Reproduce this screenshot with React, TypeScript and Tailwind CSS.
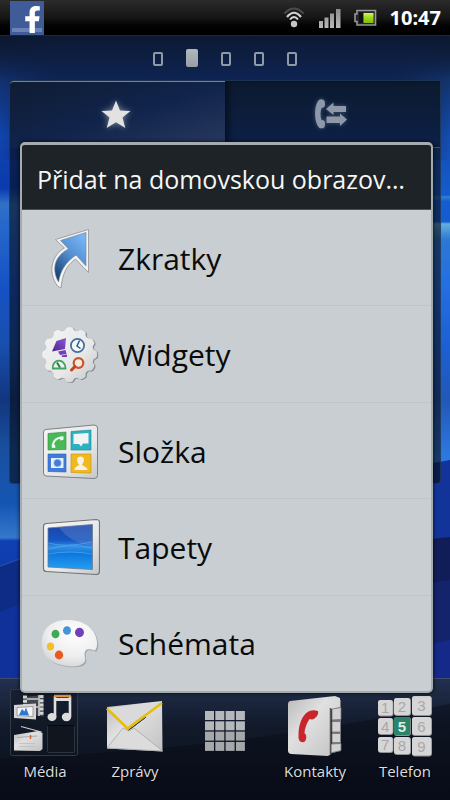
import React from 'react';
import { FaFacebookF } from 'react-icons/fa';

function Wallpaper() {
  return (
    <svg className="absolute inset-0 h-full w-full" viewBox="0 0 450 800" preserveAspectRatio="none" aria-hidden="true">
      <defs>
        <linearGradient id="wl" x1="0" y1="0" x2="0" y2="800" gradientUnits="userSpaceOnUse">
          <stop offset="0.045" stopColor="#0d1c3a" />
          <stop offset="0.1" stopColor="#11306e" />
          <stop offset="0.17" stopColor="#1145ae" />
          <stop offset="0.235" stopColor="#0a3aae" />
          <stop offset="0.255" stopColor="#2f72c4" />
          <stop offset="0.28" stopColor="#2668ca" />
          <stop offset="0.36" stopColor="#1552c4" />
          <stop offset="0.43" stopColor="#184fae" />
          <stop offset="0.5" stopColor="#12367e" />
          <stop offset="0.56" stopColor="#194f9e" />
          <stop offset="0.63" stopColor="#1556b4" />
          <stop offset="0.672" stopColor="#3478cc" />
          <stop offset="0.676" stopColor="#0f40b4" />
          <stop offset="0.75" stopColor="#0e38a4" />
          <stop offset="0.85" stopColor="#10309c" />
        </linearGradient>
        <linearGradient id="wr" x1="0" y1="0" x2="0" y2="800" gradientUnits="userSpaceOnUse">
          <stop offset="0.045" stopColor="#0d1c38" />
          <stop offset="0.1" stopColor="#12336a" />
          <stop offset="0.17" stopColor="#144cae" />
          <stop offset="0.244" stopColor="#145ccf" />
          <stop offset="0.246" stopColor="#2e82d2" />
          <stop offset="0.252" stopColor="#145ccf" />
          <stop offset="0.277" stopColor="#145ccf" />
          <stop offset="0.28" stopColor="#62aede" />
          <stop offset="0.3" stopColor="#2c78d4" />
          <stop offset="0.35" stopColor="#2470e2" />
          <stop offset="0.43" stopColor="#1c60d4" />
          <stop offset="0.5" stopColor="#2258b8" />
          <stop offset="0.57" stopColor="#2d78e0" />
        </linearGradient>
        <linearGradient id="wt" x1="0" x2="1" y1="0" y2="0">
          <stop offset="0" stopColor="#0e2150" stopOpacity="0" />
          <stop offset="0.12" stopColor="#0e2452" />
          <stop offset="0.88" stopColor="#0e2452" />
          <stop offset="1" stopColor="#0e2150" stopOpacity="0" />
        </linearGradient>
        <linearGradient id="wd" x1="0" x2="0" y1="0" y2="1">
          <stop offset="0" stopColor="#0c1830" stopOpacity="0.9" />
          <stop offset="1" stopColor="#0c1830" stopOpacity="0" />
        </linearGradient>
      </defs>
      <rect width="225" height="800" fill="url(#wl)" />
      <rect x="225" width="225" height="800" fill="url(#wr)" />
      <rect y="36" width="450" height="124" fill="url(#wt)" />
      <rect y="36" width="450" height="44" fill="url(#wd)" />
      <path d="M0 566 L28 556 V720 H0Z" fill="#0e2c86" />
      <path d="M0 566 L28 556" stroke="#1f4ca4" strokeWidth="1.5" />
      <path d="M0 612 L28 600 V720 H0Z" fill="#10309a" />
      <path d="M225 500 L450 460 V700 H225Z" fill="#12349a" />
      <path d="M225 560 L450 537 V700 H225Z" fill="#111d58" />
      <path d="M225 610 L450 580 V700 H225Z" fill="#14246c" />
      <path d="M225 690 L450 640 V700 H225Z" fill="#15298a" />
    </svg>
  );
}

function StatusBar() {
  return (
    <header className="relative flex h-9 items-center border-b border-[#232426] bg-linear-to-b from-[#2b2b2b] via-[#161616] to-black pl-[10px] pr-[9px]">
      <span className="relative flex h-[34px] w-[34px] items-end justify-end bg-[#3f5b98] pb-[2px] pr-[3px]" aria-label="Facebook">
        <span className="absolute inset-x-[2px] bottom-[3px] h-[4px] bg-[#6b82b4]" />
        <FaFacebookF className="relative h-[27px] w-[17px] text-white" preserveAspectRatio="none" />
      </span>
      <div className="ml-auto flex items-center">
        <svg width="94" height="36" viewBox="283 0 94 36" aria-hidden="true">
          <defs>
            <linearGradient id="sig" x1="0" y1="0" x2="0" y2="1">
              <stop offset="0" stopColor="#8d8d8d" />
              <stop offset="1" stopColor="#b8b8b8" />
            </linearGradient>
            <linearGradient id="bat" x1="0" y1="0" x2="0" y2="1">
              <stop offset="0" stopColor="#d3f56b" />
              <stop offset="0.4" stopColor="#a4dd1e" />
              <stop offset="1" stopColor="#7fbe08" />
            </linearGradient>
          </defs>
          <g fill="none" strokeLinecap="butt">
            <path d="M284.500 13.500 Q294 3.500 303.500 13.500" stroke="#4b4b4b" strokeWidth="2" />
            <path d="M287 17 Q294 8.500 301 17" stroke="#d2d2d2" strokeWidth="2.200" />
            <path d="M290 19.500 Q294 14.500 298 19.500" stroke="#dadada" strokeWidth="2" />
          </g>
          <circle cx="294" cy="24" r="3.200" fill="#c4c4c4" />
          <path d="M319 21h4v7h-4zM324.500 17.500h4v10.500h-4zM330 13.500h4v14.500h-4zM336 9h4.500v19h-4.500z" fill="url(#sig)" />
          <path d="M357 10.500 H375.500 V25 H357 V21.500 H355 V14 H357Z" fill="#252525" stroke="#969696" strokeWidth="1.600" />
          <rect x="359" y="12.500" width="4" height="10.500" fill="#111" />
          <rect x="363.500" y="13" width="10" height="10" fill="url(#bat)" />
        </svg>
        <time className="ml-[13px] font-['Noto_Sans',sans-serif] text-[20px] font-bold leading-[36px] text-white">10:47</time>
      </div>
    </header>
  );
}

function PageDots() {
  return (
    <nav aria-label="Plochy" className="relative flex h-11 items-center justify-center gap-[23px]">
      {[0, 1, 2, 3, 4].map((i) =>
        i === 1 ? (
          <button key={i} aria-label="Plocha 2" className="h-[18px] w-[12px] rounded-[2px] bg-linear-to-b from-[#b4b8be] to-[#999da4]" />
        ) : (
          <button key={i} aria-label={'Plocha ' + (i + 1)} className="mt-[2px] h-[14px] w-[10px] rounded-[2px] border-2 border-[#9299a6]" />
        ),
      )}
    </nav>
  );
}

function HomeWidget() {
  return (
    <section className="relative mx-[9px] flex h-[404px] flex-col rounded-[4px] border border-[#2c4668]/60 bg-[#060d18]/60">
      <div className="flex h-[67px]">
        <button aria-label="Oblíbené" className="flex flex-1 justify-center rounded-tl-[4px] border-t border-[#75839a] bg-linear-to-br from-[#0f1c33] via-[#10234a] to-[#293a60] pt-[15px] pr-[3px]">
          <svg width="36" height="36" viewBox="0 0 36 36" className="drop-shadow-[0_0_3px_rgba(255,255,255,0.5)]">
            <path d="M18 3.500 L22 13.500 L32.500 14 L24.500 20.500 L27.300 31 L18 25.300 L8.700 31 L11.500 20.500 L3.500 14 L14 13.500Z" fill="#e2e2e2" />
          </svg>
        </button>
        <button aria-label="Hovory" className="flex flex-1 justify-center border-b border-l border-b-[#35558a] border-l-[#08101f] bg-linear-to-b from-[#0c1a2f] to-[#0d2048] pt-[17px] pr-[3px] shadow-[inset_4px_0_4px_rgba(0,0,0,0.35)]">
          <svg width="36" height="36" viewBox="0 0 36 36" className="drop-shadow-[0_0_2px_rgba(150,170,200,0.4)]" fill="#8f98a8">
            <path d="M6 2 C8 .5 11.500 1.500 11.800 4 L12 7 C11.800 9 10.500 10 8.500 10 Q6.500 16 8.500 22 C11 22 12 23 12 25 L11.800 28 C11.500 30.500 8 31 6 29.500 C.8 24 .8 7 6 2Z" />
            <path d="M13 11 L20.500 4.500 V8 H33 V14 H20.500 V17Z" />
            <path d="M34 21.500 L27 15.500 V18.500 H13.500 V25 H27 V28Z" />
          </svg>
        </button>
      </div>
    </section>
  );
}

const gearPath =
  Array.from({ length: 180 }, (_, i) => {
    const a = (i / 180) * Math.PI * 2;
    const r = 26 + 1.7 * Math.tanh(2 * Math.cos(12 * a) + 0.5);
    return (i ? 'L' : 'M') + (29.5 + r * Math.cos(a)).toFixed(2) + ' ' + (29.5 + r * Math.sin(a)).toFixed(2);
  }).join('') + 'Z';

function SharedGradients() {
  return (
    <svg className="absolute h-0 w-0" aria-hidden="true">
      <defs>
        <linearGradient id="white" x1="0" y1="0" x2="1" y2="1">
          <stop offset="0" stopColor="#f4f4f4" />
          <stop offset="0.6" stopColor="#e8e8e9" />
          <stop offset="1" stopColor="#c4c6c8" />
        </linearGradient>
        <radialGradient id="pal" cx="0.6" cy="0.3" r="0.8">
          <stop offset="0" stopColor="#ffffff" />
          <stop offset="0.6" stopColor="#eeeeef" />
          <stop offset="1" stopColor="#cfd1d3" />
        </radialGradient>
        <linearGradient id="arr" x1="0.8" y1="0" x2="0.2" y2="1">
          <stop offset="0" stopColor="#78b6f6" />
          <stop offset="0.45" stopColor="#5591d2" />
          <stop offset="1" stopColor="#153f70" />
        </linearGradient>
        <linearGradient id="scr" x1="0" y1="0" x2="0" y2="1">
          <stop offset="0" stopColor="#1e44a4" />
          <stop offset="0.35" stopColor="#1556c4" />
          <stop offset="0.5" stopColor="#2f8fe6" />
          <stop offset="0.65" stopColor="#0d77dc" />
          <stop offset="1" stopColor="#23a0f4" />
        </linearGradient>
        <linearGradient id="pur" x1="0" y1="1" x2="1" y2="0">
          <stop offset="0" stopColor="#4d2490" />
          <stop offset="1" stopColor="#8c58d4" />
        </linearGradient>
        <linearGradient id="dk" x1="0" y1="0" x2="1" y2="1">
          <stop offset="0" stopColor="#b9b9ba" />
          <stop offset="0.4" stopColor="#e0e0e0" />
          <stop offset="1" stopColor="#c2c2c3" />
        </linearGradient>
      </defs>
    </svg>
  );
}

const iconClass = 'h-[60px] w-[60px] shrink-0';

function ShortcutIcon() {
  return (
    <svg className={iconClass} viewBox="0 0 60 60" aria-hidden="true">
      <path d="M48.500 .5 L15.500 10.500 L24.500 19 C13 25 6.500 42 17.500 57 L21 59 C22.500 45 26 37 35.500 30 L48.500 43.500Z" fill="#f3f3f3" stroke="#8e9294" strokeWidth=".8" />
      <path d="M46 3.500 L20.500 11.500 L28.500 20 C15 27 11 39 18.500 53 C20.500 41 26 33 36 26 L46 37Z" fill="url(#arr)" stroke="#6d8091" strokeWidth=".6" />
    </svg>
  );
}

function WidgetsIcon() {
  return (
    <svg className={iconClass} viewBox="0 0 60 60" aria-hidden="true">
      <path d={gearPath} transform="translate(1 0.6)" fill="#777b7d" />
      <path d={gearPath} fill="url(#white)" stroke="#b4b8ba" strokeWidth=".4" />
      <path d="M16.500 16 L26 13 L25 24 L12 26.500Z" fill="url(#pur)" />
      <path d="M18 26.500 L25.500 25 L26.500 29 L20 30Z M21.500 30.500 L27 29.500 V32 H22Z" fill="#6f43b4" />
      <circle cx="37.500" cy="20.500" r="6.600" fill="#f5f8fb" stroke="#456f9f" strokeWidth="1.800" />
      <path d="M39.500 15.500 L37 21 L40.500 23.500" fill="none" stroke="#2f567f" strokeWidth="1.500" />
      <path d="M12.800 43.500 C12 33 25.500 33 25.500 43.500Z" fill="#eaf3ec" stroke="#45a164" strokeWidth="1.800" />
      <path d="M17 37.500 L20 42.500" stroke="#2c7a48" strokeWidth="2" />
      <circle cx="38.500" cy="38" r="4.800" fill="#f3e8e4" stroke="#cc5326" strokeWidth="2.200" />
      <path d="M35 41.500 L31.500 45" stroke="#c34519" strokeWidth="3" strokeLinecap="round" />
    </svg>
  );
}

function FolderIcon() {
  return (
    <svg className={iconClass} viewBox="0 0 60 60" aria-hidden="true">
      <path d="M6 7.500 L54 3 Q57.500 3 57.500 6 V53.500 Q57.500 56.500 54 56.500 L6 54 Q3.500 53.500 3.500 51 V10 Q3.500 7.800 6 7.500Z" fill="url(#white)" stroke="#7d8284" strokeWidth="1" />
      <g transform="translate(0 -1)">
        <path d="M8 12.500 L26 11 V28.500 L8 29Z" fill="#48b957" stroke="#338c43" strokeWidth=".6" />
        <path d="M31 10.500 L51 9 V29 L31 29Z" fill="#2bb2c0" stroke="#198896" strokeWidth=".6" />
        <path d="M8 33 H26 V51 L8 50.500Z" fill="#3f7bd9" stroke="#2c5cae" strokeWidth=".6" />
        <path d="M31 33 H51 V52 L31 51.500Z" fill="#f0b91f" stroke="#c4920f" strokeWidth=".6" />
        <path d="M22.500 16.500 C15 17 12.500 21 13 26.500" fill="none" stroke="#f1f7f2" strokeWidth="2" />
        <path d="M19.500 16 l4 -.8 v3.500 l-3 .8z M11.500 23.500 l3.500 .3 .5 3 -3.500 .2z" fill="#f1f7f2" />
        <path d="M33.500 13 L48.500 12 V22.500 H43 L41 25.500 L39 23 H33.500Z" fill="#f1f4f5" />
        <path d="M11 37 H23.500 V47 H11Z" fill="#e8eef8" />
        <circle cx="17.500" cy="42" r="3.600" fill="#3f7bd9" stroke="#7da2e2" strokeWidth=".8" />
        <path d="M34.500 49 C34.500 45.500 38 45.500 39 43.500 C36 40 36.500 35.500 40.500 35.500 C44.500 35.500 45 40 42 43.500 C43 45.500 47.500 45.500 47.500 49Z" fill="#f6f2e8" />
      </g>
    </svg>
  );
}

function WallpaperIcon() {
  return (
    <svg className={iconClass} viewBox="0 0 60 60" aria-hidden="true">
      <path d="M6.500 5.500 L56 1.500 Q59.500 1.500 59.500 4.500 V53 Q59.500 56.500 56 56.500 L6.500 53.500 Q3.500 53.500 3.500 50.500 V8.500 Q3.500 5.800 6.500 5.500Z" fill="url(#white)" stroke="#6f7476" strokeWidth="1.200" />
      <g transform="translate(0 -1)">
        <path d="M8 11 L52.500 7.500 V52.500 L8 50Z" fill="url(#scr)" stroke="#6b7c90" strokeWidth=".8" />
        <path d="M19 10.300 L52 7.800 V29 Q30 26 19 10.300Z" fill="#5d83cc" opacity=".45" />
        <path d="M8.500 26 Q25 31 52 25 M8.500 32 Q30 26 52 31 M8.500 37 Q30 33 52 37" fill="none" stroke="#62b4f4" strokeWidth=".9" opacity=".6" />
      </g>
    </svg>
  );
}

function ThemesIcon() {
  return (
    <svg className={iconClass} viewBox="0 0 60 60" aria-hidden="true">
      <path d="M2.500 31 C1 13 15 5.500 30 6.500 C46 7 57 17 57.500 29 C58 33 57 36 55.500 37.500 C53 36 47 34.500 45.500 38 C44 43 47 45 45 49 C41 54.500 29 53 20 51 C10 48 3 42 2.500 31Z" transform="translate(.6 .4)" fill="#a2a7aa" />
      <path d="M2 31 C.5 13 14 5 29.500 6 C46 6.500 56.500 17 57 28 C57.300 32 56.500 35 55 36.500 C52 35.500 46.500 34 45 37.500 C43.500 42 46.500 44.500 44.500 48 C40.500 54 28 52.800 19.500 50.500 C9 47.500 2.500 41 2 31Z" fill="url(#pal)" />
      <ellipse cx="15.500" cy="20" rx="4" ry="4.300" fill="#3faa55" />
      <ellipse cx="27" cy="16.500" rx="4" ry="4.300" fill="#4694d8" />
      <ellipse cx="39.500" cy="18.500" rx="4.500" ry="4.700" fill="#7440ba" />
      <ellipse cx="10.500" cy="32.500" rx="3.600" ry="4" fill="#f3bf26" />
      <ellipse cx="19" cy="41" rx="4.200" ry="4.400" fill="#ea5a1c" />
    </svg>
  );
}

const items = [
  { label: 'Zkratky', Icon: ShortcutIcon },
  { label: 'Widgety', Icon: WidgetsIcon },
  { label: 'Složka', Icon: FolderIcon },
  { label: 'Tapety', Icon: WallpaperIcon },
  { label: 'Schémata', Icon: ThemesIcon },
];

function AddDialog() {
  return (
    <div role="dialog" aria-labelledby="dialog-title" className="absolute bottom-[107px] left-[20px] right-[17px] top-[142px] flex flex-col overflow-hidden rounded-[5px] border-2 border-t-[3px] border-[#a6abae] bg-[#c8ced1] shadow-[0_0_4px_rgba(0,0,0,0.8)]">
      <h1 id="dialog-title" className="h-[65px] shrink-0 truncate border-b border-[#4a5154] bg-[#1d2326] pl-[15px] pr-[20px] pt-[2px] text-[25px] leading-[64px] text-[#f6f6f6]">
        Přidat na domovskou obrazov…
      </h1>
      <ul className="flex flex-1 flex-col divide-y divide-[#bec4c7]">
        {items.map(({ label, Icon }) => (
          <li key={label} className="flex flex-1">
            <button className="flex w-full items-center gap-[18px] pl-[18px] pt-[2px] text-left text-[30px] leading-[40px] text-[#0a0a0a]">
              <Icon />
              {label}
            </button>
          </li>
        ))}
      </ul>
    </div>
  );
}

const dockIconClass = 'h-[70px] w-[90px]';

function MediaIcon() {
  return (
    <svg className={dockIconClass} viewBox="0 0 90 70" aria-hidden="true">
      <rect x="10.500" y=".5" width="67" height="66" rx="2" fill="#101723" fillOpacity=".55" stroke="#303947" />
      <path d="M23.500 8 L43.500 6 V27.500 L23.500 25Z" fill="#44484e" />
      <path d="M25 6.500 V24 M41.500 6 V27" stroke="#d4d4d4" strokeWidth="4" strokeDasharray="3 1.200" />
      <path d="M39 6 V27" stroke="#d4d4d4" strokeWidth="1.500" />
      <path d="M27 10 H38 M27 18 H38" stroke="#ccc" strokeWidth="1.500" />
      <path d="M14 16 L36 14.500 V30.500 L14 29Z" fill="#d4d4d4" />
      <path d="M17 18.500 L33 17.500 V27.500 L17 26.500Z" fill="#f4f4f4" stroke="#8c8c8c" strokeWidth=".8" />
      <path d="M19 26 L22 20 L24.500 22.500 L26 18.500 L29 26.500Z" fill="#2a78d0" />
      <path d="M55 28 V7 M70 28 V7" stroke="#dedede" strokeWidth="2.600" />
      <path d="M54 7 H71" stroke="#e79a4b" strokeWidth="2.500" />
      <path d="M55 10.500 H70" stroke="#dedede" strokeWidth="3" />
      <ellipse cx="52" cy="28" rx="4.500" ry="4" fill="#dcdcdc" />
      <ellipse cx="66.500" cy="28" rx="4.700" ry="4.200" fill="#dcdcdc" />
      <path d="M21 37.500 L41.500 43" stroke="#d0d0d0" strokeWidth="1.200" />
      <path d="M14 46 L38 42 L42.500 44 V60 L40 62 L14 61.500Z" fill="url(#dk)" />
      <path d="M17 48.500 L37 47" stroke="#aaa" strokeWidth="1" />
      <path d="M30.500 46 V50" stroke="#e0602a" strokeWidth="1.500" />
      <path d="M19 54.500 H35 M19 57.500 H35" stroke="#bcbcbc" strokeWidth=".8" />
      <rect x="47.500" y="36.500" width="27" height="27" rx="1" fill="#10151e" stroke="#2c3441" />
      <path d="M47.500 36.500 H74.500" stroke="#05080e" />
    </svg>
  );
}

function MailIcon() {
  return (
    <svg className={dockIconClass} viewBox="0 0 90 70" aria-hidden="true">
      <path d="M17 18 L72 12 L72.500 62.500 L17 59.500Z" fill="url(#dk)" />
      <path d="M17 59 L33 39 L39 42 L44 39 L72.500 62Z" fill="#dcdcdc" stroke="#a8a8a8" strokeWidth=".8" />
      <path d="M17 19 L72 13.500 L37.500 40Z" fill="#dadada" />
      <path d="M38.500 41 L56 28 L43 38Z" fill="#3a3a3a" stroke="#3a3a3a" strokeWidth="1" />
      <path d="M17 19.500 L37.500 39.500 L72 14" fill="none" stroke="#e4bf0e" strokeWidth="2.600" />
    </svg>
  );
}

function AppsIcon() {
  return (
    <svg className={dockIconClass} viewBox="0 0 90 70" aria-hidden="true">
      {[0, 1, 2, 3].flatMap((r) =>
        [0, 1, 2, 3].map((c) => (
          <rect key={r * 4 + c} x={25 + c * 10.3} y={22 + r * 10.3} width="9" height="9" fill={r < 2 ? '#b5b7bb' : '#a5a7ab'} />
        )),
      )}
    </svg>
  );
}

function ContactsIcon() {
  return (
    <svg className={dockIconClass} viewBox="0 0 90 70" aria-hidden="true">
      <path d="M62 9 L71 11 V62 L62 64Z" fill="#77797b" />
      <path d="M62 20 L71 18.500 V30.500 L62 31Z M62 32.500 H70.500 V43 H62Z M62 44.500 H70.500 V53.500 H62Z M61 55 L71 54.500 V61.500 L61 64Z" fill="#d2d2d3" stroke="#6d6f71" strokeWidth=".8" />
      <path d="M20 12 L65 7 L70 9 V18 L61 20 V65 L58 67 L21 65 Q18 64.500 18 61.500 V15 Q18 12.500 20 12Z" fill="url(#dk)" />
      <path d="M60.500 19 V65" stroke="#55585a" strokeWidth="1.500" />
      <path d="M38.500 22.500 Q43 20.500 48 22 Q49 26 44.500 29.500 Q42.500 31 39.500 30 Q35 37 34.500 44 Q37 46 36 50 Q35 54 31.500 53 Q28 52 28.500 46 C28.500 36 32 26 38.500 22.500Z" fill="#c9262b" />
    </svg>
  );
}

const keys = [
  { n: '1', x: 18, y: 11, w: 15.5, h: 16.5 },
  { n: '2', x: 34, y: 9, w: 17, h: 18 },
  { n: '3', x: 52, y: 7, w: 20, h: 20 },
  { n: '4', x: 18, y: 29, w: 15.5, h: 17 },
  { n: '5', x: 34, y: 28, w: 17, h: 19 },
  { n: '6', x: 52, y: 28, w: 20, h: 19 },
  { n: '7', x: 18, y: 48, w: 15.5, h: 16 },
  { n: '8', x: 34, y: 48, w: 17, h: 18 },
  { n: '9', x: 52, y: 48, w: 20, h: 19.5 },
];

function PhoneIcon() {
  return (
    <svg className="h-[70px] w-[90px] font-['Liberation_Sans',sans-serif] [text-shadow:none]" viewBox="0 0 90 70" aria-hidden="true">
      {keys.map((k) => (
        <g key={k.n}>
          <rect x={k.x} y={k.y} width={k.w} height={k.h} rx="3" fill="#8f9092" />
          <rect x={k.x} y={k.y} width={k.w - 0.8} height={k.h - 1} rx="2.500" fill={k.n === '5' ? '#2b8368' : '#d6d6d6'} />
          <text x={k.x + k.w / 2 - 0.5} y={k.y + k.h / 2 + 5} textAnchor="middle" fontSize="15" fontWeight={k.n === '5' ? 700 : 400} fill={k.n === '5' ? '#dcebe5' : '#a8a8a8'}>
            {k.n}
          </text>
        </g>
      ))}
    </svg>
  );
}

const dock = [
  { label: 'Média', Icon: MediaIcon },
  { label: 'Zprávy', Icon: MailIcon },
  { label: '', Icon: AppsIcon },
  { label: 'Kontakty', Icon: ContactsIcon },
  { label: 'Telefon', Icon: PhoneIcon },
];

function Dock() {
  return (
    <nav className="relative mt-auto grid h-[122px] grid-cols-5 overflow-hidden border-t border-[#3c4c6c] bg-linear-to-b from-[#22304f] via-[#121a2a] via-40% to-[#080c18] pt-[10px]">
      <svg className="absolute inset-0 h-full w-full" viewBox="0 0 450 122" preserveAspectRatio="none" aria-hidden="true">
        <path d="M0 80 Q250 70 450 25 V122 H0Z" fill="#080c16" opacity=".45" />
      </svg>
      {dock.map(({ label, Icon }) => (
        <button key={label} aria-label={label || 'Aplikace'} className="relative flex flex-col items-center text-[15px] leading-[24px] text-[#dcdcdc] [text-shadow:1px_1px_2px_#000]">
          <Icon />
          {label}
        </button>
      ))}
    </nav>
  );
}

export default function App() {
  return (
    <main className="relative flex min-h-screen flex-col overflow-hidden bg-[#0e2452] font-['Open_Sans','Noto_Sans',sans-serif]">
      <SharedGradients />
      <Wallpaper />
      <StatusBar />
      <PageDots />
      <HomeWidget />
      <Dock />
      <AddDialog />
    </main>
  );
}
